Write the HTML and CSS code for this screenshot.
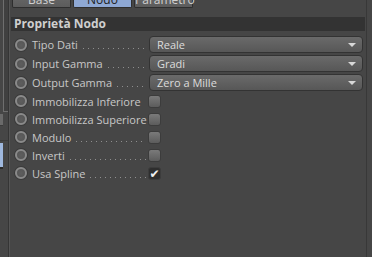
FILE: index.html
```html
<!DOCTYPE html>
<html lang="it">
<head>
  <meta charset="UTF-8">
  <title>Proprietà Nodo</title>
  <link rel="stylesheet" href="styles.css">
</head>
<body>
  <div class="side">
    <div class="side-box"></div>
    <div class="side-icon"></div>
    <div class="side-gap"></div>
    <div class="side-blue"></div>
  </div>

  <div class="panel">
    <div class="tabs">
      <div class="tab">Base</div>
      <div class="tab active">Nodo</div>
      <div class="tab">Parametro</div>
    </div>

    <div class="group-title">Proprietà Nodo</div>

    <div class="rows">
      <div class="row tall">
        <span class="radio"></span>
        <span class="label">Tipo Dati<i class="dots"></i></span>
        <div class="select">Reale<span class="arrow"></span></div>
      </div>
      <div class="row tall">
        <span class="radio"></span>
        <span class="label">Input Gamma<i class="dots"></i></span>
        <div class="select">Gradi<span class="arrow"></span></div>
      </div>
      <div class="row tall">
        <span class="radio"></span>
        <span class="label">Output Gamma<i class="dots"></i></span>
        <div class="select">Zero a Mille<span class="arrow"></span></div>
      </div>
      <div class="row">
        <span class="radio"></span>
        <span class="label">Immobilizza Inferiore</span>
        <span class="check"></span>
      </div>
      <div class="row">
        <span class="radio"></span>
        <span class="label">Immobilizza Superiore</span>
        <span class="check"></span>
      </div>
      <div class="row">
        <span class="radio"></span>
        <span class="label">Modulo<i class="dots"></i></span>
        <span class="check"></span>
      </div>
      <div class="row">
        <span class="radio"></span>
        <span class="label">Inverti<i class="dots"></i></span>
        <span class="check"></span>
      </div>
      <div class="row">
        <span class="radio"></span>
        <span class="label">Usa Spline<i class="dots"></i></span>
        <span class="check on">✔</span>
      </div>
    </div>
  </div>
</body>
</html>
```

FILE: styles.css
```css
body {
  margin: 0;
  height: 257px;
  overflow: hidden;
  display: flex;
  background: #464646;
  font-family: "Open Sans", "DejaVu Sans", sans-serif;
  font-size: 11px;
  color: #c8c8c8;
}

/* pannello laterale tagliato a sinistra */
.side {
  width: 8px;
  flex-shrink: 0;
  border-right: 1px solid #353535;
  box-shadow: 1px 0 0 #555;
  display: flex;
  flex-direction: column;
}

.side-box {
  height: 111px;
  margin-left: 3px;
  border-left: 1px solid #6e6e6e;
  border-bottom: 1px solid #6e6e6e;
  background: #404040;
}

.side-icon {
  height: 11px;
  margin-top: 2px;
  width: 3px;
  background: #6a6a6a;
  border-bottom: 1px solid #3a3a3a;
}

.side-gap {
  height: 14px;
  border-bottom: 1px solid #3c3c3c;
}

.side-blue {
  height: 24px;
  width: 3px;
  margin-top: 2px;
  background: #9fb8de;
  border-bottom: 2px solid #2a2a2a;
}

.panel {
  flex: 1;
  padding: 0 1px 0 2px;
  border-right: 1px solid #383838;
  margin-right: 5px;
}

.tabs {
  display: flex;
  gap: 2px;
  margin-top: -8px;
  padding-left: 1px;
}

.tab {
  width: 57px;
  height: 15px;
  line-height: 15px;
  text-align: center;
  background: linear-gradient(#6a6a6a, #5c5c5c);
  border: 1px solid #2e2e2e;
  border-top: none;
  border-radius: 0 0 2px 2px;
  color: #d0d0d0;
  font-size: 12px;
}

.tab.active {
  background: #8ea8d4;
  color: #202020;
}

.group-title {
  margin-top: 9px;
  height: 14px;
  line-height: 14px;
  padding-left: 3px;
  background: #333333;
  font-weight: bold;
  color: #cfcfcf;
  font-size: 12px;
}

.rows {
  padding-top: 4px;
}

.row {
  display: flex;
  align-items: center;
  height: 18px;
}

.row.tall {
  height: 19px;
}

.radio {
  width: 8px;
  height: 8px;
  margin: 0 5px 0 4px;
  border-radius: 50%;
  background: radial-gradient(#5e5e5e, #545454);
  border: 2px solid #8a8a8a;
  box-shadow: 0 0 0 1px #3a3a3a;
}

.label {
  width: 115px;
  display: flex;
  align-items: baseline;
  white-space: nowrap;
  font-size: 11px;
}

.dots {
  flex: 1;
  height: 1px;
  margin: 0 1px 0 5px;
  background: repeating-linear-gradient(to right, #8e8e8e 0 1px, transparent 1px 5px);
}

.select {
  flex: 1;
  height: 15px;
  line-height: 15px;
  margin: 0 2px 0 2px;
  padding-left: 7px;
  display: flex;
  justify-content: space-between;
  align-items: center;
  border-radius: 4px;
  background: linear-gradient(#6a6a6a, #575757);
  border: 1px solid #333;
  color: #dcdcdc;
}

.arrow {
  width: 0;
  height: 0;
  margin-right: 6px;
  border-left: 4px solid transparent;
  border-right: 4px solid transparent;
  border-top: 4px solid #d8d8d8;
}

.check {
  width: 11px;
  height: 11px;
  margin-left: 1px;
  border-radius: 3px;
  background: linear-gradient(#7a7a7a, #5c5c5c);
  border: 1px solid #3c3c3c;
}

.check.on {
  background: #2e2e2e;
  color: #f0f0f0;
  font-size: 12px;
  line-height: 11px;
  text-align: center;
  overflow: hidden;
}
```
